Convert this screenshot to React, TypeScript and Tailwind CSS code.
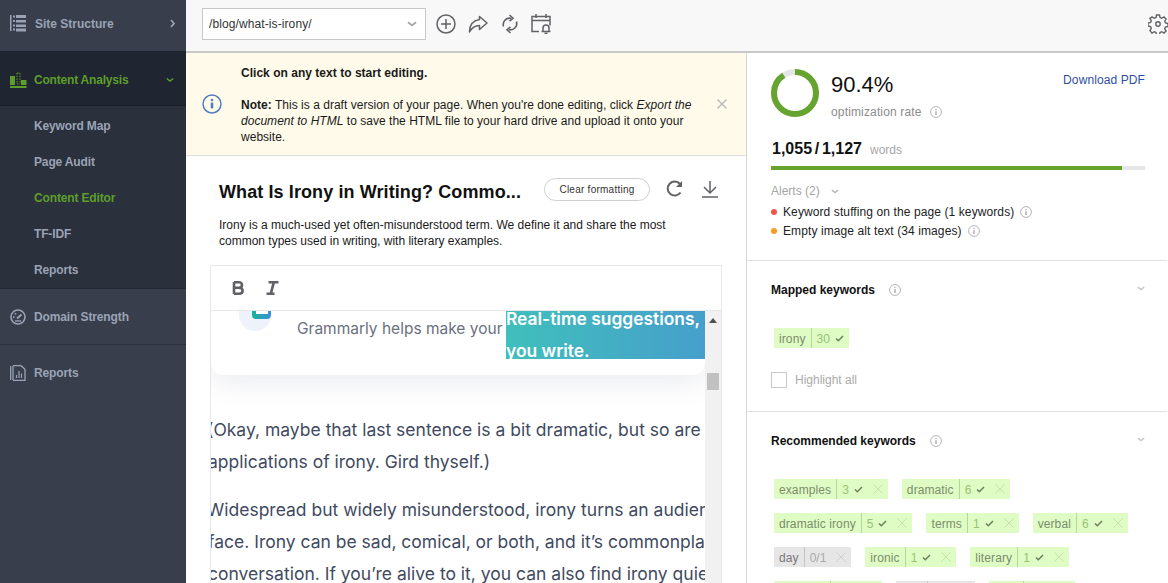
import * as React from "react";

const arial = "font-['Liberation_Sans',Arial,sans-serif]";

function Info({ className = "" }: { className?: string }) {
  return (
    <svg viewBox="0 0 12 12" className={`h-3 w-3 shrink-0 text-[#b4b4b4] ${className}`} fill="none">
      <circle cx="6" cy="6" r="5.4" stroke="currentColor" />
      <circle cx="6" cy="3.6" r="0.8" fill="currentColor" />
      <rect x="5.2" y="5.2" width="1.6" height="3.8" fill="currentColor" />
    </svg>
  );
}

function Chevron({ className = "" }: { className?: string }) {
  return (
    <svg viewBox="0 0 10 6" className={className} fill="none">
      <path d="M1 1.2 5 4.4 9 1.2" stroke="currentColor" strokeWidth="1.8" />
    </svg>
  );
}

function SiteIcon() {
  return (
    <svg viewBox="0 0 17 17" className="h-[17px] w-[17px] text-[#9aa3b5]" fill="currentColor">
      <rect x="0" y="0" width="1.5" height="16" />
      <rect x="3" y="0.5" width="2" height="2" />
      <rect x="6" y="0" width="10" height="3" />
      <rect x="3" y="5" width="2" height="2" />
      <rect x="6" y="5" width="10" height="2.5" />
      <rect x="3" y="9.5" width="2" height="2" />
      <rect x="6" y="9.5" width="10" height="2.5" />
      <rect x="3" y="13.5" width="2" height="2" />
      <rect x="6" y="13.5" width="10" height="3" />
    </svg>
  );
}

function AnalysisIcon() {
  return (
    <svg viewBox="0 0 17 16" className="h-4 w-[17px] text-[#5d9e2b]" fill="currentColor">
      <rect x="0" y="4" width="5" height="9" />
      <rect x="11" y="8" width="5.5" height="5" />
      <rect x="0" y="14" width="16.5" height="2" />
      <path d="M7 1h3M7 1v11M10 1v11M7 12h3" stroke="currentColor" strokeDasharray="1.500 1.200" fill="none" />
    </svg>
  );
}

function GaugeIcon() {
  return (
    <svg viewBox="0 0 16 16" className="h-4 w-4 text-[#9aa3b5]" fill="none">
      <circle cx="8" cy="8" r="7" stroke="currentColor" strokeWidth="1.6" />
      <path d="M7 9.500 11.500 5.500" stroke="currentColor" strokeWidth="1.800" />
      <circle cx="3.800" cy="8" r="0.900" fill="currentColor" />
      <circle cx="5.500" cy="4.800" r="0.900" fill="currentColor" />
      <path d="M5 12h6" stroke="currentColor" strokeWidth="1.400" />
    </svg>
  );
}

function ReportIcon() {
  return (
    <svg viewBox="0 0 16 16" className="h-4 w-4 text-[#9aa3b5]" fill="none" stroke="currentColor">
      <path d="M0.700 1v14" strokeWidth="1.300" />
      <path d="M3 1v14" strokeWidth="1.300" />
      <path d="M3 .7h8l4 3.500V15.300H3" strokeWidth="1.300" />
      <path d="M6.500 13V10M9 13V6M11.500 13V8.500" strokeWidth="1.200" />
    </svg>
  );
}

function ToolIcons() {
  return (
    <div className="ml-[10px] flex items-center text-[#606266]">
      <svg viewBox="0 0 20 20" className="h-5 w-5" fill="none" stroke="currentColor" strokeWidth="1.500">
        <circle cx="10" cy="10" r="9" />
        <path d="M10 5v10M5 10h10" />
      </svg>
      <svg viewBox="0 0 20 20" className="ml-[12px] h-5 w-5" fill="none" stroke="currentColor" strokeWidth="1.500">
        <path d="M11.500 2.500 19 9l-7.500 6.500V11.500C7 11.500 4 13.500 1.500 18c0-7 3.500-11.500 10-12.500z" strokeLinejoin="round" />
      </svg>
      <svg viewBox="0 0 20 20" className="ml-[12px] h-5 w-5" fill="none" stroke="currentColor" strokeWidth="1.600">
        <path d="M3.500 12.500C2.200 7.500 6 3.500 11 4.200" />
        <path d="M9.500 1 13 4.200 9.500 7.200" />
        <path d="M16.500 7.500c1.300 5-2.500 9-7.500 8.300" />
        <path d="M10.500 19 7 15.800l3.500-3" />
      </svg>
      <svg viewBox="0 0 20 21" className="ml-[11px] h-[21px] w-5" fill="none" stroke="currentColor" strokeWidth="1.500">
        <path d="M8 18.500H1V3.500h18v9" />
        <path d="M1 7.500h18M5 1v4M15 1v4" />
        <path d="M10.500 18.500h9M12 18v-3a3 3 0 0 1 6 0v3" />
        <path d="M13.500 20.300h3" />
      </svg>
    </div>
  );
}

function SideItem({ icon, label }: { icon: React.ReactNode; label: string }) {
  return (
    <div className="flex h-[55px] items-center pl-[10px]">
      <span className="flex w-6 shrink-0">{icon}</span>
      <span className="text-xs font-bold tracking-[-0.12px] text-[#9aa3b5]">{label}</span>
    </div>
  );
}

function Sidebar() {
  const sub = ["Keyword Map", "Page Audit", "Content Editor", "TF-IDF", "Reports"];
  return (
    <aside className="flex w-[186px] shrink-0 flex-col bg-[#383e4c]">
      <div className="flex h-[51px] shrink-0 items-center justify-between pb-1 pl-[10px] pr-[11px]">
        <div className="flex items-center">
          <span className="flex w-[25px]">
            <SiteIcon />
          </span>
          <span className="text-xs font-bold text-[#9aa3b5]">Site Structure</span>
        </div>
        <svg viewBox="0 0 5 9" className="h-[9px] w-[5px] text-[#9aa3b5]" fill="none">
          <path d="M1 1 4 4.500 1 8" stroke="currentColor" strokeWidth="1.700" />
        </svg>
      </div>
      <div className="flex h-[55px] shrink-0 items-center justify-between border-b border-[#191e28] bg-[#1f2531] pl-[10px] pr-[12px] pt-[3px]">
        <div className="flex items-center">
          <span className="flex w-6">
            <AnalysisIcon />
          </span>
          <span className="text-xs font-bold tracking-[-0.2px] text-[#5d9e2b]">Content Analysis</span>
        </div>
        <Chevron className="h-[6px] w-2 text-[#5d9e2b]" />
      </div>
      <div className="flex h-[183px] shrink-0 flex-col border-b border-[#232833] bg-[#2a303c] pt-[2px]">
        {sub.map((s) => (
          <div
            key={s}
            className={`flex h-9 items-center pl-[34px] text-xs font-bold tracking-[-0.15px] ${
              s === "Content Editor" ? "text-[#5d9e2b]" : "text-[#9aa3b5]"
            }`}
          >
            {s}
          </div>
        ))}
      </div>
      <div className="border-b border-[#2a303c]">
        <SideItem icon={<GaugeIcon />} label="Domain Strength" />
      </div>
      <SideItem icon={<ReportIcon />} label="Reports" />
    </aside>
  );
}

function Chip({
  word,
  count,
  grey,
  close = true,
  check = true,
}: {
  word: string;
  count: string;
  grey?: boolean;
  close?: boolean;
  check?: boolean;
}) {
  return (
    <div className={`flex h-5 items-center text-xs ${grey ? "bg-[#e6e6e6]" : "bg-[#dffcc4]"}`}>
      <span
        className={`flex h-full items-center px-[5px] pt-px tracking-[0.1px] ${
          grey ? "border-r border-[#c4c4c4] text-[#777]" : "border-r border-[#b5d795] text-[#7c8c6c]"
        }`}
      >
        {word}
      </span>
      <span className={`ml-[5px] pt-px ${grey ? "text-[#aaa]" : "text-[#97c277]"}`}>{count}</span>
      {check && (
        <svg viewBox="0 0 9 7" className="ml-[5px] h-[7px] w-[9px] text-[#6b7f5a]" fill="none">
          <path d="M1 3.500 3.300 5.700 8 1" stroke="currentColor" strokeWidth="1.500" />
        </svg>
      )}
      {close ? (
        <svg
          viewBox="0 0 10 10"
          className={`ml-[10px] mr-[5px] h-[10px] w-[10px] ${grey ? "text-[#cfcfcf]" : "text-[#c2e4a6]"}`}
          fill="none"
        >
          <path d="M.500.500l9 9M9.500.500l-9 9" stroke="currentColor" />
        </svg>
      ) : (
        <span className="w-[5px]" />
      )}
    </div>
  );
}

function RightPanel() {
  return (
    <section className="flex w-[421px] shrink-0 flex-col border-l border-[#d6d6d6] bg-white text-xs">
      <div className="h-[208px] shrink-0 border-b border-[#e2e2e2] pl-[24px] pr-[22px] pt-[16px]">
        <div className="flex items-start">
          <svg viewBox="0 0 48 48" className="h-12 w-12 shrink-0 -rotate-90">
            <circle cx="24" cy="24" r="21" fill="none" stroke="#e6e6e6" strokeWidth="6" />
            <circle cx="24" cy="24" r="21" fill="none" stroke="#67a32f" strokeWidth="6" strokeDasharray="119.300 132" />
          </svg>
          <div className="ml-3 pt-px">
            <div className="text-[22px] leading-[30px] text-[#111]">90.4%</div>
            <div className="mt-[4px] flex items-center tracking-[0.15px] text-[#8c8c8c]">
              optimization rate
              <Info className="ml-2" />
            </div>
          </div>
          <a className="ml-auto mt-[3px] tracking-[0.1px] text-[#2e4fa3]">Download PDF</a>
        </div>
        <div className="mt-[19px] flex items-baseline pl-px">
          <span className="text-base font-bold leading-5 text-[#111] [word-spacing:-1.7px]">1,055 / 1,127</span>
          <span className="ml-2 text-[#a6a6a6]">words</span>
        </div>
        <div className="mt-[7px] h-1 bg-[#e6e6e6]">
          <div className="h-full w-[351px] bg-[#67a32f]" />
        </div>
        <div className="mt-[13px] flex items-center text-[#a6a6a6]">
          Alerts (2)
          <Chevron className="ml-[11px] h-[5px] w-2 text-[#b4b4b4]" />
        </div>
        <div className="mt-[5px] flex items-center tracking-[0.1px] text-[#222]">
          <span className="mr-[6px] h-[6px] w-[6px] rounded-full bg-[#f0574a]" />
          Keyword stuffing on the page (1 keywords)
          <Info className="ml-[6px]" />
        </div>
        <div className="mt-[3px] flex items-center tracking-[0.1px] text-[#222]">
          <span className="mr-[6px] h-[6px] w-[6px] rounded-full bg-[#fb9a1f]" />
          Empty image alt text (34 images)
          <Info className="ml-[6px]" />
        </div>
      </div>
      <div className="h-[151px] shrink-0 border-b border-[#e2e2e2] pl-[24px] pr-[22px] pt-[21px]">
        <div className="flex items-center">
          <span className="font-bold text-[#111]">Mapped keywords</span>
          <Info className="ml-[14px]" />
          <Chevron className="ml-auto -mt-1 h-[5px] w-2 text-[#c4c4c4]" />
        </div>
        <div className="ml-[3px] mt-[30px] flex">
          <Chip word="irony" count="30" close={false} />
        </div>
        <label className="mt-[23px] flex items-center text-[#aaa]">
          <span className="mr-2 h-4 w-4 border border-[#c8c8c8]" />
          <span className="pt-px">Highlight all</span>
        </label>
      </div>
      <div className="pl-[24px] pr-[22px] pt-[21px]">
        <div className="flex items-center">
          <span className="font-bold text-[#111]">Recommended keywords</span>
          <Info className="ml-[14px]" />
          <Chevron className="ml-auto -mt-1 h-[5px] w-2 text-[#c4c4c4]" />
        </div>
        <div className="ml-[3px] mt-[30px] flex flex-wrap gap-x-[14px] gap-y-[14px]">
          <Chip word="examples" count="3" />
          <Chip word="dramatic" count="6" />
          <Chip word="dramatic irony" count="5" />
          <Chip word="terms" count="1" />
          <Chip word="verbal" count="6" />
          <Chip word="day" count="0/1" grey check={false} />
          <Chip word="ironic" count="1" />
          <Chip word="literary" count="1" />
          <Chip word="sarcasm" count="2" />
          <Chip word="way" count="0/1" grey check={false} />
          <Chip word="tone" count="2" />
        </div>
      </div>
    </section>
  );
}

function Editor() {
  return (
    <div className="mx-6 mt-4 flex min-h-0 flex-1 flex-col border-x border-t border-[#e8e8e8]">
      <div className="flex h-[45px] shrink-0 items-center border-b border-[#e8e8e8] pl-[21px] text-[#606266]">
        <svg viewBox="0 0 12 14" className="h-[14px] w-3" fill="none" stroke="currentColor" strokeWidth="2.600">
          <path d="M2 .9v12.200M2 1.300h5c4 0 4 5.400 0 5.400H2M7 6.700c4.800 0 4.800 6 0 6H2" />
        </svg>
        <svg viewBox="0 0 13 14" className="ml-[22px] h-[14px] w-[13px]" fill="none" stroke="currentColor" strokeWidth="2.600">
          <path d="M2.500 1.300h10M.500 12.700h8M7.800 1.300 4.800 12.700" />
        </svg>
      </div>
      <div className="flex min-h-0 flex-1">
        <div className="w-[494px] overflow-hidden bg-white">
          <div className="relative flex h-16 rounded-b-xl bg-white shadow-[0_8px_28px_rgba(60,70,110,0.10)]">
            <div className="relative ml-[28px] h-5 w-8 shrink-0 overflow-hidden rounded-b-full bg-[#eef2fb]">
              <div className="absolute left-[13px] top-0 h-2 w-[19px] rounded-b-sm bg-gradient-to-r from-[#17b394] to-[#3b8fd9]" />
              <div className="absolute left-[17px] top-0 h-[3px] w-3 bg-white" />
            </div>
            <div className="ml-[26px] mt-2 w-[209px] whitespace-nowrap font-['Inter',sans-serif] text-[15.5px] leading-5 text-[#6b7080]">
              Grammarly helps make your
            </div>
            <div className="h-12 flex-1 overflow-hidden bg-gradient-to-r from-[#40bfbb] to-[#469fcb] font-['Inter',sans-serif] text-[17.4px] font-semibold leading-8 text-white">
              <div className="-mt-2 whitespace-nowrap">Real-time suggestions,</div>
              <div className="whitespace-nowrap">you write.</div>
            </div>
          </div>
          <div className="-ml-[3px] mt-[39px] whitespace-nowrap font-['Inter',sans-serif] text-[17.5px] leading-8 text-[#3f4a5f]">
            <p className="-ml-px">(Okay, maybe that last sentence is a bit dramatic, but so are</p>
            <p>applications of irony. Gird thyself.)</p>
            <p className="-ml-px mt-4">Widespread but widely misunderstood, irony turns an audience</p>
            <p>face. Irony can be sad, comical, or both, and it’s commonplace in</p>
            <p>conversation. If you’re alive to it, you can also find irony quiet</p>
          </div>
        </div>
        <div className="relative w-4 shrink-0 bg-[#f1f1f1]">
          <div className="mx-auto mt-[7px] h-0 w-0 border-x-[4px] border-b-[5px] border-x-transparent border-b-[#505050]" />
          <div className="mx-[2px] mt-[50px] h-[17px] bg-[#c1c1c1]" />
        </div>
      </div>
    </div>
  );
}

function Center() {
  return (
    <section className="flex w-[560px] shrink-0 flex-col overflow-hidden bg-white">
      <div className="flex h-[103px] shrink-0 items-center border-b border-[#dedede] bg-[#fffaea] text-xs leading-4 tracking-[0.025px] text-[#1a1a1a]">
        <svg viewBox="0 0 20 20" className="ml-[16px] h-5 w-5 shrink-0 text-[#4f7fc0]" fill="none">
          <circle cx="10" cy="10" r="9" stroke="currentColor" strokeWidth="1.500" />
          <circle cx="10" cy="6" r="1.300" fill="currentColor" />
          <rect x="8.700" y="8.500" width="2.600" height="6" rx="1" fill="currentColor" />
        </svg>
        <div className="ml-[19px] w-[460px] pt-[2px]">
          <p className="font-bold">Click on any text to start editing.</p>
          <p className="mt-4">
            <b>Note:</b> This is a draft version of your page. When you're done editing, click{" "}
            <i>Export the document to HTML</i> to save the HTML file to your hard drive and upload it onto your website.
          </p>
        </div>
        <svg viewBox="0 0 10 10" className="ml-4 h-[10px] w-[10px] text-[#b4b4b4]" fill="none">
          <path d="M.500.500l9 9M9.500.500l-9 9" stroke="currentColor" strokeWidth="1.200" />
        </svg>
      </div>
      <div className="flex shrink-0 items-center pl-[33px] pr-[27px] pt-6">
        <h1 className="text-lg font-bold leading-6 tracking-[0.1px] text-[#111]">What Is Irony in Writing? Commo...</h1>
        <button className="ml-auto flex h-[23px] w-[106px] -translate-y-[3px] items-center justify-center rounded-full border border-[#cfcfcf] text-[10px] tracking-[0.25px] text-[#333]">
          Clear formatting
        </button>
        <svg viewBox="0 0 18 18" className="ml-4 h-[18px] w-[18px] -translate-y-[3px] text-[#606266]" fill="none" stroke="currentColor" strokeWidth="2">
          <path d="M14.500 12.500A7 7 0 1 1 14 4" />
          <path d="M16 1v6h-6" fill="currentColor" strokeWidth="0" />
        </svg>
        <svg viewBox="0 0 18 18" className="ml-[17px] h-[18px] w-[18px] -translate-y-[3px] text-[#606266]" fill="none" stroke="currentColor" strokeWidth="1.500">
          <path d="M9 1v11M3 7l6 6 6-6M1 17h16" />
        </svg>
      </div>
      <p className="shrink-0 pl-[33px] pr-[60px] pt-[13px] text-xs leading-4 text-[#1a1a1a]">
        Irony is a much-used yet often-misunderstood term. We define it and share the most common types used in writing, with literary examples.
      </p>
      <Editor />
    </section>
  );
}

export default function App() {
  return (
    <div className={`flex h-[583px] w-[1168px] overflow-hidden bg-white ${arial}`}>
      <Sidebar />
      <div className="flex min-w-0 flex-1 flex-col">
        <header className="flex h-[53px] shrink-0 items-center border-b-2 border-[#c8c8c8] bg-[#f8f8f8] pb-1 pl-4 pr-0">
          <div className="flex h-8 w-[224px] items-center justify-between border border-[#c8c8c8] bg-white pl-[6px] pr-2 text-xs tracking-[0.1px] text-[#333]">
            /blog/what-is-irony/
            <Chevron className="h-[6px] w-[10px] text-[#a6a6a6]" />
          </div>
          <ToolIcons />
          <svg viewBox="0 0 20 20" className="ml-auto h-5 w-5 shrink-0 text-[#606266]" fill="none" stroke="currentColor" strokeWidth="1.400">
            <circle cx="10" cy="10" r="2.200" />
            <path d="M8.500 1h3l.5 2.500 1.800.8L16 2.900l2.100 2.100-1.400 2.200.8 1.800 2.500.5v3l-2.500.5-.8 1.800 1.400 2.200-2.100 2.100-2.200-1.400-1.800.8-.5 2.500h-3l-.5-2.500-1.800-.8-2.200 1.400L1.900 16.500l1.400-2.200-.8-1.800L0 12V9l2.500-.5.8-1.800L1.900 4.500 4 2.900l2.200 1.400L8 3.500z" />
          </svg>
        </header>
        <div className="flex min-h-0 flex-1">
          <Center />
          <RightPanel />
        </div>
      </div>
    </div>
  );
}
